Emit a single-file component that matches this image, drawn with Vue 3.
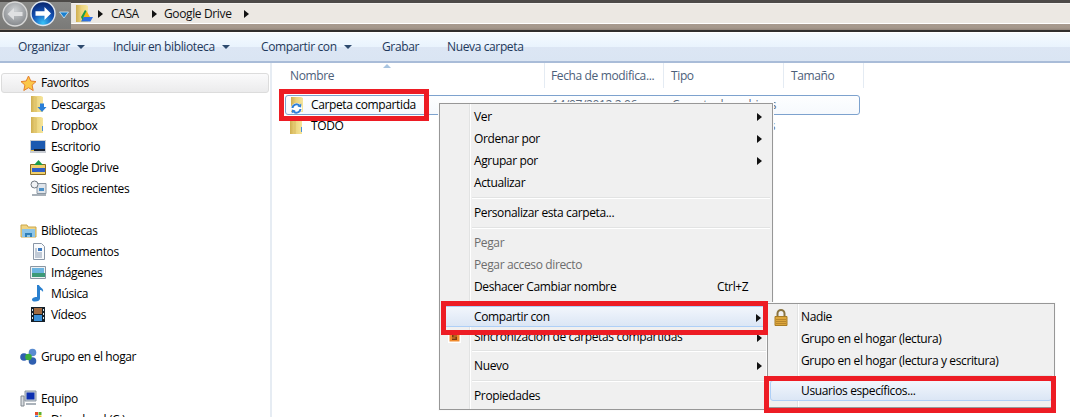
<script setup>
const groups = [
  { head: { label: 'Favoritos', icon: 'star', active: true }, items: [
    { label: 'Descargas', icon: 'down' }, { label: 'Dropbox', icon: 'folder' },
    { label: 'Escritorio', icon: 'desk' }, { label: 'Google Drive', icon: 'gd' },
    { label: 'Sitios recientes', icon: 'recent' } ] },
  { head: { label: 'Bibliotecas', icon: 'lib' }, items: [
    { label: 'Documentos', icon: 'doc' }, { label: 'Imágenes', icon: 'img' },
    { label: 'Música', icon: 'music' }, { label: 'Vídeos', icon: 'video' } ] },
  { head: { label: 'Grupo en el hogar', icon: 'home' }, items: [] },
  { head: { label: 'Equipo', icon: 'pc' }, items: [ { label: 'Disco local (C:)', icon: 'disk' } ] }
]
const menu = [
  { t: 'Ver', arrow: 1 }, { t: 'Ordenar por', arrow: 1 }, { t: 'Agrupar por', arrow: 1 }, { t: 'Actualizar' },
  { sep: 1 }, { t: 'Personalizar esta carpeta...' }, { sep: 1 },
  { t: 'Pegar', off: 1 }, { t: 'Pegar acceso directo', off: 1 }, { t: 'Deshacer Cambiar nombre', key: 'Ctrl+Z' },
  { sep: 1 }, { t: 'Compartir con', arrow: 1, hot: 1 }, { t: 'Sincronización de carpetas compartidas', arrow: 1, sync: 1 },
  { sep: 1 }, { t: 'Nuevo', arrow: 1 }, { sep: 1 }, { t: 'Propiedades' }
]
const sub = [
  { t: 'Nadie', lock: 1 }, { t: 'Grupo en el hogar (lectura)' }, { t: 'Grupo en el hogar (lectura y escritura)' },
  { sep: 1 }, { t: 'Usuarios específicos...', hot: 1 }
]
const tools = [ ['Organizar', 1], ['Incluir en biblioteca', 1], ['Compartir con', 1], ['Grabar', 0], ['Nueva carpeta', 0] ]
</script>

<template>
  <div class="win">
    <svg width="0" height="0" class="defs">
      <defs>
        <radialGradient id="gb" cx=".5" cy=".35" r=".65"><stop offset="0" stop-color="#cfd2d5"/><stop offset="1" stop-color="#85888c"/></radialGradient>
        <radialGradient id="bb" cx=".5" cy=".9" r=".8"><stop offset="0" stop-color="#38c4f7"/><stop offset=".55" stop-color="#1554b8"/><stop offset="1" stop-color="#0a2c78"/></radialGradient>
        <linearGradient id="fd"><stop offset="0" stop-color="#cfae50"/><stop offset=".45" stop-color="#ecd47e"/><stop offset="1" stop-color="#f5e59c"/></linearGradient>
      </defs>
    </svg>
    <header class="top">
      <div class="navs">
        <svg class="nav" width="30" height="30" viewBox="0 0 30 30">
          <circle cx="15" cy="15" r="12" fill="url(#gb)" stroke="#d8d8d8" stroke-width="1.400"/>
          <path d="M7.500 15l6.500-6v4h8.500v4H14v4z" fill="#dfe0e2"/>
        </svg>
        <svg class="nav fwd" width="30" height="30" viewBox="0 0 30 30">
          <circle cx="15" cy="14.500" r="12" fill="url(#bb)" stroke="#dfe6ee" stroke-width="1.400"/>
          <path d="M23 14.500l-6.500-6.500v4.200H7.500v4.600h9V21z" fill="#fff"/>
        </svg>
        <svg class="chev" width="10" height="8" viewBox="0 0 10 8"><path d="M.5 1h9L5 7z" fill="#1a80d0" stroke="#d6e8f5" stroke-width=".8"/></svg>
      </div>
      <div class="address">
        <svg width="18" height="20" viewBox="0 0 18 20"><path d="M1 1h10l2 1v16H1z" fill="url(#fd)"/><path d="M8 13l3.500-6 3.500 6z" fill="#f2b70f"/><path d="M6 17.500l2.500-4.500H18l-2.500 4.500z" fill="#2f6fe0"/><path d="M8.500 13l3-6-1.500-1-4 7 1.500 3.500z" fill="#1c9b4a"/></svg>
        <i class="tri a1"></i><span class="crumb c1">CASA</span>
        <i class="tri a2"></i><span class="crumb c2">Google Drive</span>
        <i class="tri a3"></i>
      </div>
    </header>

    <nav class="tools">
      <div v-for="t in tools" :key="t[0]" class="tool">{{ t[0] }}<i v-if="t[1]" class="caret"></i></div>
    </nav>

    <main class="main">
      <aside class="side">
        <section v-for="g in groups" :key="g.head.label" class="group">
          <div class="head" :class="{ active: g.head.active }">
            <svg class="ic" width="17" height="17" viewBox="0 0 17 17">
              <path v-if="g.head.icon==='star'" d="M8.500 1l2.300 5 5.200.6-3.900 3.500 1.100 5.400-4.700-2.800-4.700 2.800 1.100-5.400L1 6.600 6.200 6z" fill="#fbc74a" stroke="#e57f2c"/>
              <g v-else-if="g.head.icon==='lib'"><path d="M1 3h6l1 2h8v10H1z" fill="#f0d484" stroke="#c9a64a"/><path d="M2 7h13v8H2z" fill="#8cc4e8"/><path d="M5 15v-4h7v4h-2v-2H7v2z" fill="#2f7fb8"/></g>
              <g v-else-if="g.head.icon==='home'"><circle cx="4" cy="9" r="3.800" fill="#2f5fb0"/><circle cx="12.500" cy="4.500" r="3.800" fill="#5a8cd0"/><circle cx="12.500" cy="13" r="3.800" fill="#2f5fb0"/><circle cx="8.500" cy="9" r="3.300" fill="#3cae3c"/></g>
              <g v-else><path d="M5 1h11v10H5z" fill="#c8d0d8" stroke="#8a96a2"/><path d="M6.500 2.500h8v7h-8z" fill="#0c2fb0"/><path d="M1 6h3v10H1z" fill="#d8dce0" stroke="#808890"/><path d="M6 13h10v2H6z" fill="#aab2ba"/></g>
            </svg>
            <span>{{ g.head.label }}</span>
          </div>
          <div v-for="it in g.items" :key="it.label" class="item">
            <svg class="ic" width="17" height="17" viewBox="0 0 17 17">
              <g v-if="it.icon==='down' || it.icon==='folder'"><path d="M1 0h10l2 1v15H1z" fill="url(#fd)"/><path d="M6 1v15" stroke="#d8bc64"/><path v-if="it.icon==='folder'" d="M12 9h1v5h-1z" fill="#4a90d8"/><path v-if="it.icon==='down'" d="M10 7.500h4V11h2.500L12 16l-4.500-5H10z" fill="#2a7fd8"/></g>
              <g v-else-if="it.icon==='desk'"><path d="M0 2h16v13H0z" fill="#c8ccd2"/><path d="M1 3h14v9H1z" fill="#1d5ab0"/><path d="M4 11h11v2H4z" fill="#1a2230"/><path d="M1 12h3v1H1z" fill="#e8c040"/></g>
              <g v-else-if="it.icon==='gd'"><path d="M.5 5.500h15v10H.5z" fill="#f0cf6a" stroke="#8a6a20"/><path d="M2 9h13v4H2z" fill="#2f5fc8"/><path d="M4 6l4.500-5L13 6z" fill="#1c9b4a"/></g>
              <g v-else-if="it.icon==='recent'"><path d="M7 3.500h9v10H7z" fill="#dfe4ea" stroke="#8a96a2"/><circle cx="4.500" cy="4.500" r="3.500" fill="#f0f2f4" stroke="#707880"/><path d="M9 8h5v3H9z" fill="#4a90c8"/><path d="M2 14h14v2H2z" fill="#a8b0b8"/></g>
              <g v-else-if="it.icon==='doc'"><path d="M3.500 .5h8l3 3v13h-11z" fill="#f8fafc" stroke="#8a96a6"/><path d="M8 5h4v3H8z" fill="#3a78c0"/><path d="M5 10h7M5 12h7M5 14h7M5 6h2M5 8h2" stroke="#8a9ab0"/></g>
              <g v-else-if="it.icon==='img'"><path d="M.5 2.500h15v12H.5z" fill="#eef1f4" stroke="#8a96a2"/><path d="M2 4h12v5H2z" fill="#6cb4e0"/><path d="M2 9h13v4H2z" fill="#3c9a78"/></g>
              <g v-else-if="it.icon==='music'"><path d="M9 0c1 3 5 3 4 7-1-2-3-2-3-2v8.500c0 2-2 3-5 3s-4-2-2-3.500c2-1.500 4-1 4-1V0z" fill="#2a80cf"/></g>
              <g v-else-if="it.icon==='video'"><path d="M1 1h14v15H1z" fill="#15202a"/><path d="M4 2h8v6H4z" fill="#a06a40"/><path d="M4 9h8v6H4z" fill="#3a90d8"/><path d="M2 3h1v2H2zM2 7h1v2H2zM2 11h1v2H2zM13 3h1v2h-1zM13 7h1v2h-1zM13 11h1v2h-1z" fill="#d8e8f0"/></g>
              <g v-else><path d="M2 9h13v6H2z" fill="#b8bec6"/><path d="M5 1h3v3H5z" fill="#e84a2a"/><path d="M8.500 1h3v3h-3z" fill="#5ab030"/><path d="M5 4.500h3v3H5z" fill="#3a80d8"/><path d="M8.500 4.500h3v3h-3z" fill="#f0c020"/></g>
            </svg>
            <span>{{ it.label }}</span>
          </div>
        </section>
      </aside>

      <section class="content">
        <div class="cols">
          <div class="col">Nombre<i class="sort"></i></div>
          <div class="col">Fecha de modifica...</div>
          <div class="col">Tipo</div>
          <div class="col">Tamaño</div>
        </div>
        <div class="row sel">
          <div class="name">
            <svg width="17" height="17" viewBox="0 0 17 17"><path d="M3 0h10l2 1v14H3z" fill="url(#fd)"/><circle cx="8.500" cy="11.500" r="5.500" fill="#fff"/><path d="M4.500 11a4 4 0 0 1 6.800-2.500" fill="none" stroke="#2f7fd8" stroke-width="2"/><path d="M9.500 9.500l3.500 1 .3-4z" fill="#2f7fd8"/><path d="M12.500 12a4 4 0 0 1-6.800 2.500" fill="none" stroke="#2f7fd8" stroke-width="2"/><path d="M7.500 13.500l-3.500-1-.3 4z" fill="#2f7fd8"/></svg>
            Carpeta compartida
          </div>
          <span>14/07/2012 2:06</span>
          <span>Carpeta de archivos</span>
        </div>
        <div class="row">
          <div class="name">
            <svg width="17" height="17" viewBox="0 0 17 17"><path d="M2 1h10l2 1v15H2z" fill="url(#fd)"/><path d="M7 2v15" stroke="#d8bc64"/><path d="M13 10h1v5h-1z" fill="#4a90d8"/></svg>
            TODO
          </div>
          <span>14/07/2012 2:06</span>
          <span>Carpeta de archivos</span>
        </div>
      </section>
    </main>

    <div class="menu">
      <template v-for="(m, i) in menu" :key="i">
        <div v-if="m.sep" class="sep"></div>
        <div v-else class="mi" :class="{ off: m.off, hot: m.hot, short: m.sync }">
          <svg v-if="m.sync" class="sync" width="13" height="13" viewBox="0 0 13 13"><path d="M0 0h13v13H0z" fill="#fff"/><path d="M1.500 1.500h10v10h-10z" fill="#f08a2c"/><path d="M4 4h5v1.500H5.500v1H9V10H4V8.500h3.500v-1H4z" fill="#7a3a10"/></svg>
          <span class="txt">{{ m.t }}</span>
          <span v-if="m.key" class="key">{{ m.key }}</span>
          <i v-if="m.arrow" class="tri arr"></i>
        </div>
      </template>
    </div>

    <div class="submenu">
      <template v-for="(m, i) in sub" :key="i">
        <div v-if="m.sep" class="sep"></div>
        <div v-else class="mi" :class="{ hot: m.hot }">
          <svg v-if="m.lock" class="lock" width="14" height="17" viewBox="0 0 14 17"><path d="M3.500 8V4.500a3.500 3.500 0 0 1 7 0V8" fill="none" stroke="#8a7440" stroke-width="2"/><path d="M1 7.500h12v9H1z" fill="#dca63c" stroke="#a87c24"/><path d="M2 10.500h10M2 12.500h10M2 14.500h10" stroke="#b8862c"/></svg>
          <span class="txt">{{ m.t }}</span>
        </div>
      </template>
    </div>

    <div class="red r1"></div>
    <div class="red r2"></div>
    <div class="red r3"></div>
  </div>
</template>

<style scoped>
.win { position: relative; width: 1070px; height: 417px; overflow: hidden; display: flex; flex-direction: column; background: #fff; font: 12px/16px "Open Sans", sans-serif; color: #000; letter-spacing: -.37px; }
.defs { position: absolute; }
i { display: block; }
.top { height: 32px; flex: none; display: flex; box-sizing: border-box; padding-top: 3px; background: linear-gradient(180deg, #4d4a48 0 3px, #b5aca3 3px, #a5978b 28px, #8f8379 30px, #302e2d 30px, #302e2d 32px); }
.navs { width: 71px; height: 27px; flex: none; display: flex; align-items: flex-start; background: linear-gradient(180deg, #8a8a88, #7a7a78); margin-top: -1px; }
.nav { flex: none; margin-top: -3px; }
.fwd { margin-left: -2px; }
.chev { flex: none; margin: 9px 0 0 1px; }
.address { flex: 1; height: 21px; box-sizing: border-box; border-top: 1px solid #f4f2ef; border-bottom: 1px solid #fff; border-left: 1px solid #e8e4de; background: #ece8e3; display: grid; grid-template-columns: 3px 18px 5px 8px 5px 41px 8px 4px 80px 8px; align-items: center; }
.address svg { grid-column: 2; margin-top: 0; }
.tri { width: 0; height: 0; border-left: 5px solid #111; border-top: 4px solid transparent; border-bottom: 4px solid transparent; }
.a1 { grid-column: 4; } .c1 { grid-column: 6; } .a2 { grid-column: 7; } .c2 { grid-column: 9; } .a3 { grid-column: 10; }
.crumb { white-space: nowrap; color: #111; }
.tools { height: 31px; flex: none; box-sizing: border-box; padding-left: 18px; display: grid; grid-template-columns: 95px 148px 121px 65px auto; align-items: center; background: linear-gradient(180deg, #fff 0 1px, #f4faff 1px, #e9f3fd 15px, #dce6f4 15px, #dae5f3 100%); border-bottom: 2px solid #a9bcd8; color: #1e395b; }
.tool { display: flex; align-items: center; white-space: nowrap; }
.caret { margin-left: 7px; border-top: 4px solid #2d4a6e; border-left: 4px solid transparent; border-right: 4px solid transparent; }
.main { flex: 1; display: flex; min-height: 0; }
.side { width: 272px; flex: none; box-sizing: border-box; padding-top: 10px; border-right: 2px solid #e6ecf3; }
.group + .group { margin-top: 21px; }
.head, .item { height: 21px; display: flex; align-items: center; white-space: nowrap; }
.head { box-sizing: border-box; padding-left: 19px; gap: 4px; margin: 0 1px; }
.active { height: 20px; margin-bottom: 1px; border: 1px solid #dcdcdc; border-radius: 3px; background: linear-gradient(180deg, #fafafb, #ebebec); padding-left: 18px; }
.item { padding-left: 30px; gap: 4px; }
.ic { flex: none; }
.content { flex: 1; min-width: 0; }
.cols { height: 25px; display: grid; grid-template-columns: 273px 119px 120px 80px; margin-bottom: 7px; color: #4c607a; }
.col { position: relative; box-sizing: border-box; padding: 5px 0 0 7px; border-right: 1px solid #e4ebf3; white-space: nowrap; }
.col:nth-child(2) { padding-left: 6px; }
.col:first-child { padding-left: 18px; }
.sort { position: absolute; left: 111px; top: 1px; border-bottom: 4px solid #a8c4e0; border-left: 4px solid transparent; border-right: 4px solid transparent; }
.row { width: 575px; height: 21px; margin-left: 13px; box-sizing: border-box; display: grid; grid-template-columns: 266px 120px auto; align-items: center; white-space: nowrap; color: #5c6b7e; }
.row.sel { height: 20px; border: 1px solid #7da2ce; border-radius: 3px; background: linear-gradient(180deg, #fdfeff, #f6f9fd); }
.name { display: flex; align-items: center; gap: 6px; padding-left: 3px; color: #000; }
.sel .name { padding-left: 2px; }
.menu, .submenu { position: absolute; box-sizing: border-box; background: #f0f0f0 linear-gradient(90deg, transparent 29px, #e2e3e3 29px, #e2e3e3 30px, #fff 30px, #fff 31px, transparent 31px); border: 1px solid #979797; padding: 2px; box-shadow: 0 0 0 1px #fbfbfb; }
.menu { left: 439px; top: 103px; width: 334px; height: 307px; }
.submenu { left: 767px; top: 303px; width: 288px; height: 105px; }
.mi { position: relative; height: 22px; display: flex; align-items: center; padding-left: 32px; white-space: nowrap; }
.submenu .mi { padding-left: 31px; }
.short { height: 20px; }
.off { color: #6d6d6d; }
.sep { height: 2px; margin: 3px 0 3px 30px; background: linear-gradient(180deg, #e2e3e3 50%, #fff 50%); }
.mi.hot { height: 21px; border: 1px solid #aecff7; border-radius: 3px; background: linear-gradient(180deg, #f2f6fc, #dbe6f5); box-sizing: border-box; padding-left: 31px; }
.submenu .mi.hot { padding-left: 30px; }
.arr { position: absolute; right: 8px; top: 7px; }
.key { position: absolute; left: 275px; }
.sync { position: absolute; left: 6px; top: 3px; }
.lock { position: absolute; left: 4px; top: 3px; }
.red { position: absolute; box-sizing: border-box; border: 5px solid #ed1c24; pointer-events: none; }
.r1 { left: 279px; top: 89px; width: 150px; height: 32px; }
.r2 { left: 441px; top: 301px; width: 327px; height: 34px; }
.r3 { left: 764px; top: 376px; width: 292px; height: 37px; }
</style>
